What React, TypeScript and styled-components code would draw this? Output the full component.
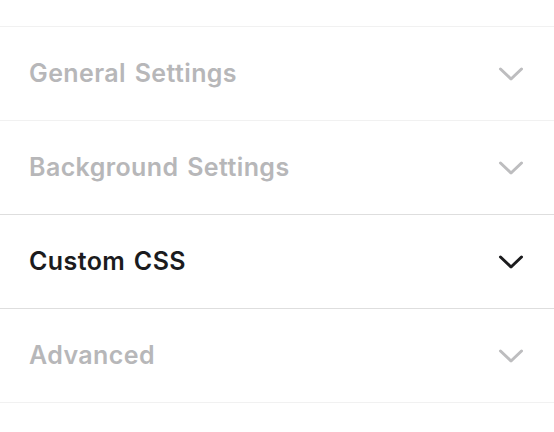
import React from "react";
import styled, { createGlobalStyle } from "styled-components";

const Global = createGlobalStyle`
  html, body { margin: 0; padding: 0; background: #ffffff; }
  body { font-family: Inter, "Noto Sans", sans-serif; }
`;

const Panel = styled.div`
  padding-top: 26px;
  display: flex;
  flex-direction: column;
`;

const Row = styled.div<{ $active?: boolean }>`
  height: 93px;
  display: flex;
  align-items: center;
  justify-content: space-between;
  padding: 0 30px 0 29px;
  border-top: 1px solid ${(p) => (p.$active ? "#dedede" : "#f1f1f1")};
  &:last-child { border-bottom: 1px solid #f1f1f1; }
`;

const Title = styled.span<{ $active?: boolean }>`
  font-size: 25px;
  font-weight: 600;
  letter-spacing: 0.4px;
  word-spacing: 2px;
  line-height: 1;
  color: ${(p) => (p.$active ? "#1b1b1d" : "#b7b7b9")};
`;

const Chevron = ({ active }: { active?: boolean }) => (
  <svg width="26" height="16" viewBox="0 0 26 16" fill="none">
    <path
      d="M2.5 3 L13 13 L23.5 3"
      stroke={active ? "#1b1b1d" : "#bdbdbf"}
      strokeWidth="3"
      strokeLinecap="round"
      strokeLinejoin="round"
    />
  </svg>
);

const items = [
  { title: "General Settings", active: false },
  { title: "Background Settings", active: false },
  { title: "Custom CSS", active: true },
  { title: "Advanced", active: false },
];

export default function App() {
  return (
    <>
      <Global />
      <Panel>
        {items.map((it, i) => (
          <Row key={it.title} $active={it.active || (i > 0 && items[i - 1].active)}>
            <Title $active={it.active}>{it.title}</Title>
            <Chevron active={it.active} />
          </Row>
        ))}
      </Panel>
    </>
  );
}
